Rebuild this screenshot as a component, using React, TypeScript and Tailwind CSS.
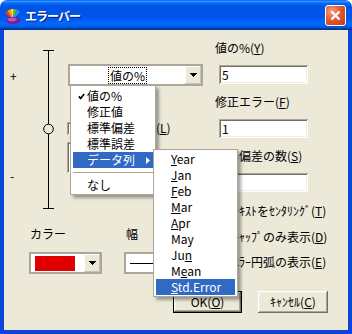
import React from "react";

const RAISED =
  "shadow-[inset_-1px_-1px_#716f64,inset_1px_1px_#ffffff,inset_-2px_-2px_#aca899,inset_2px_2px_#f1efe2]";
const SUNKEN =
  "shadow-[inset_1px_1px_#aca899,inset_-1px_-1px_#ffffff,inset_2px_2px_#716f64,inset_-2px_-2px_#f1efe2]";

function U({ children }: { children: React.ReactNode }) {
  return <span className="underline underline-offset-[1px]">{children}</span>;
}

function DownArrow() {
  return (
    <svg width="7" height="4" viewBox="0 0 7 4" shapeRendering="crispEdges">
      <path d="M0 0h7v1h-1v1h-1v1h-1v1h-1v-1h-1v-1h-1v-1h-1z" fill="#000" />
    </svg>
  );
}

function TitleIcon() {
  return (
    <svg width="18" height="20" viewBox="0 0 18 20">
      <polygon points="9,15 0.6,7.9 3.2,5.7" fill="#e8331b" />
      <polygon points="9,15 3.2,5.7 6.3,4.3" fill="#f7941d" />
      <polygon points="9,15 6.3,4.3 9.8,4" fill="#ffe600" />
      <polygon points="9,15 9.8,4 13.1,4.8" fill="#4cb848" />
      <polygon points="9,15 13.1,4.8 16.1,6.6" fill="#1e90ff" />
      <ellipse cx="9" cy="15.5" rx="7" ry="3.6" fill="#7a1f8f" />
      <ellipse cx="8" cy="14.6" rx="4.5" ry="1.8" fill="#c04cd0" />
    </svg>
  );
}

function CheckBox() {
  return <div className={`w-[13px] h-[13px] shrink-0 bg-white ${SUNKEN}`} />;
}

function Field({ value }: { value?: string }) {
  return (
    <div className={`ml-[4px] w-[89px] h-[19px] bg-white flex items-center pl-[3px] ${SUNKEN}`}>
      {value}
    </div>
  );
}

function ComboButton() {
  return (
    <div className="w-[16px] h-full bg-[#ece9d8] flex items-center justify-center shadow-[inset_-1px_-1px_#c9c5b6,inset_1px_1px_#ffffff]">
      <DownArrow />
    </div>
  );
}

function MainMenu() {
  return (
    <div className="absolute left-[70px] top-[85px] w-[86px] bg-white border border-[#aca899] pt-[2px] pb-[1px] px-[2px] shadow-[3px_3px_3px_rgba(0,0,0,0.35)]">
      <div className="h-[16px] flex items-center">
        <div className="w-[14px] flex justify-center pl-[2px]">
          <svg width="7" height="7" viewBox="0 0 7 7">
            <polyline points="0.8,3.4 2.6,5.4 6.2,1" fill="none" stroke="#000" strokeWidth="1.6" />
          </svg>
        </div>
        <span>値の%</span>
      </div>
      <div className="h-[16px] flex items-center pl-[14px]">修正値</div>
      <div className="h-[16px] flex items-center pl-[14px]">標準偏差</div>
      <div className="h-[16px] flex items-center pl-[14px]">標準誤差</div>
      <div className="h-[16px] flex items-center pl-[14px] bg-[#316ac5] text-white">
        <span>データ列</span>
        <svg className="ml-auto mr-[3px]" width="4" height="7" viewBox="0 0 4 7">
          <path d="M0 0L4 3.5L0 7Z" fill="#fff" />
        </svg>
      </div>
      <div className="h-[9px] flex items-center">
        <div className="h-px w-full bg-[#aca899]" />
      </div>
      <div className="h-[16px] flex items-center pl-[14px]">なし</div>
    </div>
  );
}

function SubMenu() {
  const items: React.ReactNode[] = [
    <><U>Y</U>ear</>,
    <><U>J</U>an</>,
    <><U>F</U>eb</>,
    <><U>M</U>ar</>,
    <><U>A</U>pr</>,
    <>May</>,
    <>Ju<U>n</U></>,
    <>M<U>e</U>an</>,
  ];
  return (
    <div className="absolute left-[153px] top-[149px] w-[85px] bg-white border border-[#aca899] py-[1px] px-[2px] shadow-[3px_3px_3px_rgba(0,0,0,0.35)]">
      {items.map((it, i) => (
        <div key={i} className="h-[16px] flex items-center pl-[15px]">
          <span>{it}</span>
        </div>
      ))}
      <div className="h-[16px] flex items-center pl-[15px] bg-[#316ac5] text-white">
        <span>
          <U>S</U>td.Error
        </span>
      </div>
    </div>
  );
}

export default function App() {
  return (
    <div className="w-[352px] h-[334px] bg-white font-['Noto_Sans_CJK_JP','Noto_Sans',sans-serif] text-[12px] leading-[14px] text-black">
      <div className="relative w-[352px] h-[334px] flex flex-col rounded-t-[7px] overflow-hidden">
        {/* Title bar */}
        <div className="h-[30px] shrink-0 flex items-center pl-[4px] pr-[6px] bg-[linear-gradient(to_bottom,#0058ee_0%,#3593ff_4%,#288eff_6%,#127dff_8%,#036ffc_10%,#0262ee_14%,#0057e5_20%,#0054e3_24%,#0055eb_56%,#005bf5_66%,#026afe_76%,#0062ef_86%,#0052d6_92%,#0040ab_94%,#003092_100%)]">
          <TitleIcon />
          <span className="ml-[3px] mt-[2px] text-white font-bold text-[12px] tracking-[-1px] [text-shadow:1px_1px_0_#0a1a80]">
            エラーバー
          </span>
          <div className="ml-auto w-[21px] h-[21px] rounded-[3px] border border-white bg-[radial-gradient(circle_at_30%_30%,#f2a58a_0%,#e05b33_45%,#c2381a_100%)] flex items-center justify-center">
            <svg width="11" height="11" viewBox="0 0 11 11">
              <path d="M1.5 1.5L9.5 9.5M9.5 1.5L1.5 9.5" stroke="#fff" strokeWidth="2.2" />
            </svg>
          </div>
        </div>

        {/* Body */}
        <div className="flex-1 flex flex-col bg-[#ece9d8] border-x-4 border-b-4 border-[#0a46d8]">
          <div className="h-[261px] flex">
            {/* Left column */}
            <div className="w-[211px] flex flex-col">
              <div className="h-[185px] flex">
                <div className="w-[36px] flex flex-col items-start pl-[6px]">
                  <span className="mt-[39px]">+</span>
                  <span className="mt-[86px]">-</span>
                </div>
                <svg className="mt-[18px]" width="16" height="164" viewBox="0 0 16 164">
                  <line x1="8.5" y1="2" x2="8.5" y2="76" stroke="#000" />
                  <line x1="8.5" y1="86" x2="8.5" y2="161" stroke="#000" />
                  <line x1="3" y1="2.5" x2="14" y2="2.5" stroke="#000" />
                  <line x1="3" y1="160.5" x2="14" y2="160.5" stroke="#000" />
                  <circle cx="8.5" cy="81" r="4.8" fill="none" stroke="#000" />
                </svg>
                <div className="ml-[11px] flex flex-col">
                  <div className="mt-[34px] ml-[1px] w-[135px] h-[22px] border-2 border-[#aca899] bg-white flex">
                    <div className="flex-1 flex items-center justify-center">
                      <span className="border border-dotted border-black px-[1px] leading-[15px]">値の%</span>
                    </div>
                    <ComboButton />
                  </div>
                  <div className="mt-[35px] flex items-center">
                    <CheckBox />
                    <span className="ml-[4px]">
                      誤差範囲表示(<U>L</U>)
                    </span>
                  </div>
                  <div className={`mt-[7px] w-[83px] h-[31px] bg-white ${SUNKEN}`} />
                </div>
              </div>
              <div className="flex-1 flex flex-col pl-[25px]">
                <div className="mt-[12px] flex">
                  <span className="ml-[1px] w-[94px]">カラー</span>
                  <span className="ml-[2px]">幅</span>
                </div>
                <div className="mt-[11px] flex">
                  <div className="w-[73px] h-[22px] border-2 border-[#aca899] bg-white flex">
                    <div className="flex-1 flex items-center pl-[4px]">
                      <div className="w-[40px] h-[15px] bg-[#e00000]" />
                    </div>
                    <ComboButton />
                  </div>
                  <div className="ml-[22px] w-[80px] h-[22px] border-2 border-[#aca899] bg-white flex items-center pl-[4px]">
                    <div className="w-[60px] h-px bg-black" />
                  </div>
                </div>
              </div>
            </div>

            {/* Right column */}
            <div className="flex-1 flex flex-col">
              <span className="mt-[11px]">
                値の%(<U>Y</U>)
              </span>
              <div className="mt-[10px]">
                <Field value="5" />
              </div>
              <span className="mt-[11px]">
                修正エラー(<U>F</U>)
              </span>
              <div className="mt-[10px]">
                <Field value="1" />
              </div>
              <span className="mt-[11px]">
                標準偏差の数(<U>S</U>)
              </span>
              <div className="mt-[10px]">
                <Field />
              </div>
              <div className="mt-[12px] flex items-center h-[14px]">
                <CheckBox />
                <span className="ml-[5px]">
                  ﾃｷｽﾄをｾﾝﾀﾘﾝｸﾞ(<U>T</U>)
                </span>
              </div>
              <div className="mt-[12px] flex items-center h-[14px]">
                <CheckBox />
                <span className="ml-[5px]">
                  ｷｬｯﾌﾟのみ表示(<U>D</U>)
                </span>
              </div>
              <div className="mt-[11px] flex items-center h-[14px]">
                <CheckBox />
                <span className="ml-[5px]">
                  ｴﾗｰ円弧の表示(<U>E</U>)
                </span>
              </div>
            </div>
          </div>

          {/* Buttons */}
          <div className="flex justify-end pr-[20px] gap-[16px]">
            <div className="w-[69px] h-[22px] border border-black">
              <div className={`w-full h-full bg-[#ece9d8] flex items-center justify-center ${RAISED}`}>
                OK(<U>O</U>)
              </div>
            </div>
            <div className={`w-[70px] h-[22px] bg-[#ece9d8] flex items-center justify-center ${RAISED}`}>
              ｷｬﾝｾﾙ(<U>C</U>)
            </div>
          </div>
        </div>

        <MainMenu />
        <SubMenu />
      </div>
    </div>
  );
}
